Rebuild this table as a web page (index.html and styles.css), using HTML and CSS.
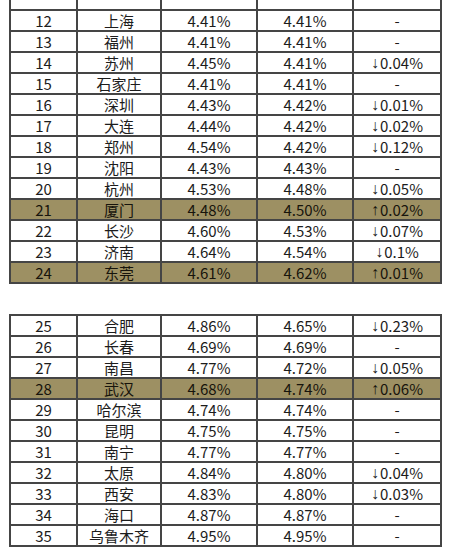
FILE: index.html
```html
<!DOCTYPE html>
<html lang="zh">
<head>
<meta charset="utf-8">
<title>城市利率</title>
<link rel="stylesheet" href="styles.css">
</head>
<body>
<div class="page">
  <div class="tbl tbl-first">
    <div class="row stub"><div></div><div></div><div></div><div></div><div></div></div>
    <div class="row"><div>12</div><div>上海</div><div>4.41%</div><div>4.41%</div><div>-</div></div>
    <div class="row"><div>13</div><div>福州</div><div>4.41%</div><div>4.41%</div><div>-</div></div>
    <div class="row"><div>14</div><div>苏州</div><div>4.45%</div><div>4.41%</div><div><span class="ar">↓</span>0.04%</div></div>
    <div class="row"><div>15</div><div>石家庄</div><div>4.41%</div><div>4.41%</div><div>-</div></div>
    <div class="row"><div>16</div><div>深圳</div><div>4.43%</div><div>4.42%</div><div><span class="ar">↓</span>0.01%</div></div>
    <div class="row"><div>17</div><div>大连</div><div>4.44%</div><div>4.42%</div><div><span class="ar">↓</span>0.02%</div></div>
    <div class="row"><div>18</div><div>郑州</div><div>4.54%</div><div>4.42%</div><div><span class="ar">↓</span>0.12%</div></div>
    <div class="row"><div>19</div><div>沈阳</div><div>4.43%</div><div>4.43%</div><div>-</div></div>
    <div class="row"><div>20</div><div>杭州</div><div>4.53%</div><div>4.48%</div><div><span class="ar">↓</span>0.05%</div></div>
    <div class="row hl"><div>21</div><div>厦门</div><div>4.48%</div><div>4.50%</div><div><span class="ar">↑</span>0.02%</div></div>
    <div class="row"><div>22</div><div>长沙</div><div>4.60%</div><div>4.53%</div><div><span class="ar">↓</span>0.07%</div></div>
    <div class="row"><div>23</div><div>济南</div><div>4.64%</div><div>4.54%</div><div><span class="ar">↓</span>0.1%</div></div>
    <div class="row hl"><div>24</div><div>东莞</div><div>4.61%</div><div>4.62%</div><div><span class="ar">↑</span>0.01%</div></div>
  </div>
  <div class="tbl tbl-second">
    <div class="row"><div>25</div><div>合肥</div><div>4.86%</div><div>4.65%</div><div><span class="ar">↓</span>0.23%</div></div>
    <div class="row"><div>26</div><div>长春</div><div>4.69%</div><div>4.69%</div><div>-</div></div>
    <div class="row"><div>27</div><div>南昌</div><div>4.77%</div><div>4.72%</div><div><span class="ar">↓</span>0.05%</div></div>
    <div class="row hl"><div>28</div><div>武汉</div><div>4.68%</div><div>4.74%</div><div><span class="ar">↑</span>0.06%</div></div>
    <div class="row"><div>29</div><div>哈尔滨</div><div>4.74%</div><div>4.74%</div><div>-</div></div>
    <div class="row"><div>30</div><div>昆明</div><div>4.75%</div><div>4.75%</div><div>-</div></div>
    <div class="row"><div>31</div><div>南宁</div><div>4.77%</div><div>4.77%</div><div>-</div></div>
    <div class="row"><div>32</div><div>太原</div><div>4.84%</div><div>4.80%</div><div><span class="ar">↓</span>0.04%</div></div>
    <div class="row"><div>33</div><div>西安</div><div>4.83%</div><div>4.80%</div><div><span class="ar">↓</span>0.03%</div></div>
    <div class="row"><div>34</div><div>海口</div><div>4.87%</div><div>4.87%</div><div>-</div></div>
    <div class="row"><div>35</div><div>乌鲁木齐</div><div>4.95%</div><div>4.95%</div><div>-</div></div>
  </div>
</div>
</body>
</html>
```

FILE: styles.css
```css
html, body {
  margin: 0;
  padding: 0;
  background: #ffffff;
}

.page {
  width: 455px;
  height: 550px;
  overflow: hidden;
  padding-left: 9px;
  box-sizing: border-box;
  font-family: "Noto Sans CJK SC", "Liberation Sans", sans-serif;
  font-size: 15px;
  color: #1c1c1c;
}

.tbl {
  width: 433px;
  box-sizing: border-box;
  border-left: 2px solid #454545;
}

.tbl-second {
  margin-top: 30px;
  border-top: 2px solid #454545;
}

.row {
  display: grid;
  grid-template-columns: 67px 84px 96px 96px 88px;
  height: 21px;
  box-sizing: border-box;
  border-bottom: 2px solid #454545;
}

.row > div {
  border-right: 2px solid #454545;
  display: flex;
  align-items: center;
  justify-content: center;
  line-height: 1;
  white-space: nowrap;
}

.row.stub {
  height: 11px;
}

.row.hl {
  background: #9d9063;
  color: #17140c;
}

.ar {
  font-family: "Liberation Sans", sans-serif;
  font-size: 16px;
  margin-right: 1px;
}
```
